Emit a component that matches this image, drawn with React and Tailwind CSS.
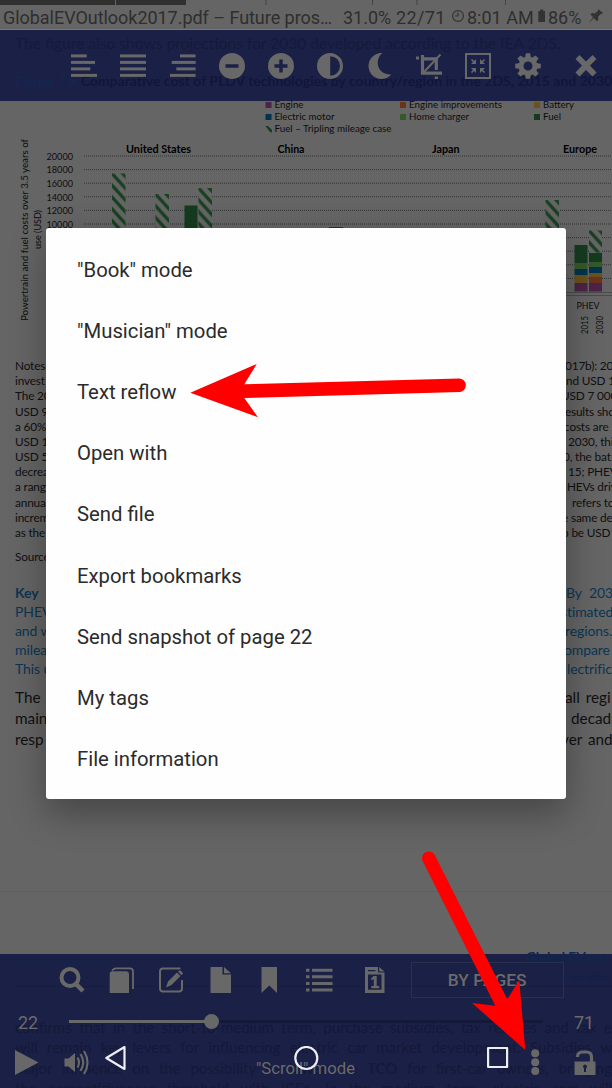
import React from "react";

const MENU = [
  '"Book" mode',
  '"Musician" mode',
  "Text reflow",
  "Open with",
  "Send file",
  "Export bookmarks",
  "Send snapshot of page 22",
  "My tags",
  "File information",
];

// [visible left part, visible right part, start x of the right part]
const NOTES = [
  ["Notes", "017b): 20", 565],
  ["invest", "nd USD 1", 566],
  ["The 20", "USD 7 000", 561],
  ["USD 9", "results sho", 561],
  ["a 60%", "costs are", 564],
  ["USD 1", "2030, thi", 568],
  ["USD 5", "0, the bat", 563],
  ["decrea", "15; PHEV", 568],
  ["a rang", "HEVs driv", 567],
  ["annua", "refers to", 572],
  ["increm", "e same de", 562],
  ["as the", "o be USD", 562],
];
const KEY = [
  ["PHEV", "stimated", 561],
  ["and w", "regions.", 565],
  ["milea", "ompare", 564],
  ["This u", "lectrific", 567],
];
const BODY = [
  ["The", "all regi", 565],
  ["main", "decad", 571],
  ["resp", "ver and", 561],
];

function Line({ row, className }) {
  return (
    <div className={"flex overflow-hidden whitespace-nowrap " + className}>
      <span className="shrink-0" style={{ width: row[2] - 15 }}>{row[0]}</span>
      <span className="shrink-0">{row[1]}</span>
    </div>
  );
}

function Icon({ w = 26, h = 26, children }) {
  return (
    <svg width={w} height={h} viewBox={`0 0 ${w} ${h}`} className="shrink-0" fill="#686868" stroke="none">
      {children}
    </svg>
  );
}

function Bars({ rows }) {
  return (
    <Icon>
      {rows.map(([x, w], i) => (
        <rect key={i} x={x} y={1.4 + i * 6.5} width={w} height="3" />
      ))}
    </Icon>
  );
}

function StatusBar() {
  return (
    <div className="relative h-[30px] shrink-0 border-b border-[#777] text-[#2e2e2e]">
      <svg className="absolute left-0 top-0" width="612" height="6">
        <path d="M0 0h115v5H0zM116 0h70v5h-70z" fill="#303030" />
        <path d="M266 0v5M372.500 0v5M417 0v5M505.500 0v5" stroke="#444" />
      </svg>
      <div className="flex h-[36px] items-center pl-[3px] text-[18px] leading-[36px] whitespace-nowrap">
        <span className="w-[340px] shrink-0 tracking-[-0.040px]">GlobalEVOutlook2017.pdf – Future pros…</span>
        <span className="w-[53px] shrink-0">31.0%</span>
        <span className="w-[55px] shrink-0 tracking-[0.350px]">22/71</span>
        <svg width="16" height="14" fill="none" stroke="#333" strokeWidth="1.2" className="-mt-1 shrink-0">
          <circle cx="7" cy="7" r="5.400" />
          <path d="M7 3.500V7H4" />
        </svg>
        <span className="w-[71px] shrink-0">8:01 AM</span>
        <svg width="10" height="14" fill="#333" className="-mt-1 shrink-0">
          <path d="M2.200 .5h3v1.500h1.800V13H.3V2h1.900z" />
        </svg>
        <span className="w-[40px] shrink-0">86%</span>
        <svg width="16" height="16" fill="#333" className="-mt-1 shrink-0">
          <path d="M10 1l5 4-1 1-1-.2-3 3 .4 3L9 13.200 5.800 10 1 15l4-6-2.600-2.600L4 5l3 .4 3.200-3z" />
        </svg>
      </div>
    </div>
  );
}

function TopBar() {
  return (
    <div className="relative h-[71px] shrink-0 overflow-hidden bg-[#1b2046]">
      <div className="absolute left-[15px] top-[3px] whitespace-nowrap font-[Lato] text-[15.600px] leading-[20px] text-[#151a3c]">
        The figure also shows projections for 2030 developed according to the IEA 2DS.
      </div>
      <div className="absolute left-[15px] top-[41px] whitespace-nowrap font-[Lato] text-[14px] font-bold leading-[20px] text-[#12163a]">
        <span className="text-[#14264f]">Figure 7 • </span>Comparative cost of PLDV technologies by country/region in the 2DS, 2015 and 2030
      </div>
      <div className="relative flex h-full items-center gap-[23.300px] pl-[71px]">
        <Bars rows={[[0, 15.7], [0, 24], [0, 19.3], [0, 26]]} />
        <Bars rows={[[0, 26], [0, 26], [0, 26], [0, 26]]} />
        <Bars rows={[[10, 15.6], [1.700, 24], [6.300, 19.3], [0, 25.6]]} />
        <Icon><path fillRule="evenodd" d="M13 0a13 13 0 1 0 0 26a13 13 0 0 0 0-26zM6.500 11.300h13v3.400h-13z" /></Icon>
        <Icon><path fillRule="evenodd" d="M13 0a13 13 0 1 0 0 26a13 13 0 0 0 0-26zM11.300 6.500h3.400v4.800h4.800v3.400h-4.800v4.800h-3.400v-4.800H6.500v-3.400h4.800z" /></Icon>
        <Icon><path fillRule="evenodd" d="M13 0a13 13 0 1 0 0 26a13 13 0 0 0 0-26zM13.200 3.200a9.800 9.800 0 0 1 0 19.600z" /></Icon>
        <Icon><path d="M15.500 0A13 13 0 1 0 24.300 21.500C16 22 10.700 16 10.700 10C10.700 5.500 12.700 2 15.500 0z" /></Icon>
        <Icon>
          <path fill="none" stroke="#686868" strokeWidth="3.2" d="M3 5H0M6.500 2V20.200H26M6.500 5.800H20.300V17M20.300 23.500V26" />
          <path fill="none" stroke="#686868" strokeWidth="2" d="M7 20L24.500 1.500" />
        </Icon>
        <Icon>
          <path fill="none" stroke="#686868" strokeWidth="2" d="M1 1h24v24H1z" />
          <path fill="none" stroke="#686868" strokeWidth="1.700" d="M6.500 6.500l3 3M19.500 6.500l-3 3M6.500 19.500l3-3M19.500 19.500l-3-3" />
          <path d="M11 6v5H6zM15 6v5h5zM11 20v-5H6zM15 20v-5h5z" />
        </Icon>
        <Icon>
          <circle cx="13" cy="13" r="7" fill="none" stroke="#686868" strokeWidth="5" />
          {[0, 45, 90, 135, 180, 225, 270, 315].map((a) => (
            <path key={a} transform={`rotate(${a} 13 13)`} d="M10.800 .2h4.400l.8 5h-6z" />
          ))}
        </Icon>
        <div className="ml-[9.500px]">
          <Icon><path d="M2.500 6l4-4L13 8.500l6.500-6.500L23.500 6l-6.500 6.500L23.500 19.500l-4 4L13 17l-6.500 6.500L2.500 19.500l6.500-7z" /></Icon>
        </div>
      </div>
    </div>
  );
}

const LEGEND = [
  [265.5, 3.5, "Engine", "#4d2347", 29],
  [400, 3.5, "Engine improvements", "#6b331c", 93],
  [534, 3.5, "Battery", "#6b511c", 31],
  [265.5, 15.5, "Electric motor", "#00344e", 60],
  [400, 15.5, "Home charger", "#35592a", 60],
  [534, 15.5, "Fuel", "#153b1f", 18],
  [265.5, 27.5, "Fuel – Tripling mileage case", null, 117],
];

// Striped bars: x, top, width, height
const STRIPED = [
  [112, 72.5, 13.5, 56],
  [155.5, 93, 13.5, 35],
  [198.5, 87, 13.5, 41],
  [545.5, 99, 13.5, 29],
  [589, 129.5, 13, 22],
];

function Chart() {
  return (
    <svg width="612" height="250" viewBox="0 0 612 250" className="shrink-0" fontFamily="Lato, sans-serif" fill="#0d0d0d">
      <defs>
        <pattern id="hatch" width="10.700" height="11.800" patternUnits="userSpaceOnUse">
          <path d="M-10.700 -11.800L21.400 23.600M-10.700 0L10.700 23.600M0 -11.800L21.400 11.800" stroke="#173f20" strokeWidth="3.300" />
        </pattern>
      </defs>
      {LEGEND.map(([x, y, t, c, w]) => (
        <g key={t}>
          {c ? <rect x={x} y={y - 2.5} width="6" height="6" fill={c} /> : <path d={`M${x} ${y - 2.5}h2.500l4 4v2.500l-2-.5z`} fill="#153b1f" />}
          <text x={x + 9} y={y + 3.3} fontSize="9.500" textLength={w} lengthAdjust="spacingAndGlyphs">{t}</text>
        </g>
      ))}
      <g fontWeight="700" fontSize="10.600" fill="#000">
        <text x="126" y="52" textLength="65" lengthAdjust="spacingAndGlyphs">United States</text>
        <text x="277.500" y="51.500" textLength="27" lengthAdjust="spacingAndGlyphs">China</text>
        <text x="432" y="52" textLength="27.500" lengthAdjust="spacingAndGlyphs">Japan</text>
        <text x="563" y="52" textLength="34" lengthAdjust="spacingAndGlyphs">Europe</text>
      </g>
      {[20000, 18000, 16000, 14000, 12000, 10000, 8000, 6000, 4000, 2000].map((v, i) => (
        <g key={v}>
          {i < 6 && <text x="46.500" y={58.700 + i * 13.600} fontSize="10.400" textLength="26.500" lengthAdjust="spacingAndGlyphs">{v}</text>}
          <path d={`M84 ${55 + i * 13.6}H612`} stroke="#333" strokeWidth="1" strokeDasharray="1 1" />
        </g>
      ))}
      {STRIPED.map(([x, y, w, h]) => (
        <g key={x} transform={`translate(${x} ${y})`}>
          <rect width={w} height={h} fill="#656565" />
          <rect width={w} height={h} fill="url(#hatch)" />
        </g>
      ))}
      <path d="M184.500 104.500h13V140h-13zM329 126h14v14h-14z" fill="#153b1f" />
      <path d="M574.500 144h13v18h-13zM589 152h13v10h-13z" fill="#153b1f" />
      <path d="M574.500 162h13v6h-13zM589 161h13v5h-13z" fill="#35592a" />
      <path d="M574.500 168h13v6h-13zM589 166h13v6h-13z" fill="#00344e" />
      <path d="M574.500 174h13v8h-13zM589 172h13v4h-13z" fill="#6b511c" />
      <path d="M589 176h13v6h-13z" fill="#6b331c" />
      <path d="M574.500 182h13v8.500h-13zM589 182h13v8.500h-13z" fill="#4d2347" />
      <path d="M46 191.500H612M46 194.500H612" stroke="#4a4a4a" strokeWidth="1" />
      <text x="576.500" y="208" fontSize="9.500" textLength="23" lengthAdjust="spacingAndGlyphs">PHEV</text>
      <text transform="translate(588 233) rotate(-90)" fontSize="9" textLength="18" lengthAdjust="spacingAndGlyphs">2015</text>
      <text transform="translate(602.500 233) rotate(-90)" fontSize="9" textLength="18" lengthAdjust="spacingAndGlyphs">2030</text>
      <text transform="translate(27.500 220) rotate(-90)" fontSize="9.800" textLength="182" lengthAdjust="spacingAndGlyphs">Powertrain and fuel costs over 3.5 years of</text>
      <text transform="translate(41 148) rotate(-90)" fontSize="9.800" textLength="39" lengthAdjust="spacingAndGlyphs">use (USD)</text>
    </svg>
  );
}

function Page() {
  return (
    <div className="flex h-[603px] shrink-0 flex-col overflow-hidden pl-[15px] font-[Lato] text-[#101010]">
      <div className="pt-[7px]">
        {NOTES.map((r) => <Line key={r[0]} row={r} className="h-[15.180px] text-[11.800px] leading-[15.180px] tracking-[-0.150px]" />)}
      </div>
      <div className="mt-[9px] text-[11.800px] leading-[15px] tracking-[-0.150px]">Source</div>
      <div className="mt-[19px] text-[#0c3552]">
        <div className="flex h-[19px] overflow-hidden whitespace-nowrap text-[14px] leading-[19px] tracking-[-0.100px]">
          <span className="w-[551px] shrink-0"><b>Key</b>&nbsp; p</span><span className="[word-spacing:4px]">By 2030</span>
        </div>
        {KEY.map((r) => <Line key={r[0]} row={r} className="h-[19px] text-[14px] leading-[19px] tracking-[-0.100px]" />)}
      </div>
      <div className="mt-[9px]">
        {BODY.map((r) => <Line key={r[0]} row={r} className="h-[21px] text-[15.300px] leading-[21px] [word-spacing:2px]" />)}
      </div>
      <div className="-ml-[15px] mt-[141px] h-px bg-[#606060]" />
    </div>
  );
}

function BottomBar() {
  return (
    <div className="relative flex h-[134px] shrink-0 flex-col bg-[#1b2046] text-[#6b6b6b]">
      <div className="absolute inset-0 overflow-hidden font-[Lato] text-[#141939]">
        <div className="absolute left-[15px] top-0 whitespace-nowrap text-[11.600px] leading-[14px] text-[#13254a]">© OECD/IEA 2017</div>
        <div className="absolute left-[564px] top-[17px] whitespace-nowrap text-[10.500px] leading-[12px] text-[#12204a]">Two millio</div>
        <div className="absolute left-[15px] top-[32px] h-px w-[597px] bg-[#181d40]" />
        <div className="absolute left-[15px] top-[63px] w-[597px] whitespace-nowrap text-[15px] leading-[20.300px] [text-align-last:justify]">
          <div>confirms that in the short-to-medium term, purchase subsidies, tax rebates and tax e</div>
          <div>will remain key levers for influencing electric car market development. Subsidies w</div>
          <div>major influence on the possibility to lower the TCO for first-car owners, bringing</div>
          <div>the competitiveness threshold with ICEs. In the medium term, electric cars will</div>
        </div>
      </div>
      <div className="absolute -top-[7px] left-[526px] whitespace-nowrap font-[Lato] text-[13.600px] font-bold leading-[20px] text-[#0b2850]">Global EV ou</div>

      <div className="relative flex h-[52px] items-center pl-[59px]">
        <div className="w-[50px]">
          <Icon>
            <circle cx="11" cy="10.500" r="8.500" fill="none" stroke="#686868" strokeWidth="4" />
            <path d="M16.500 16.500L24 24" stroke="#686868" strokeWidth="4.500" />
          </Icon>
        </div>
        <div className="w-[50px]">
          <Icon>
            <path d="M.7 26V7Q.7 4.300 3.500 4.300H17q3 0 3 3V26z" />
            <path d="M3 3.500Q5 1.300 7 1.300h14q3 0 3 3V22" fill="none" stroke="#686868" strokeWidth="1.800" />
          </Icon>
        </div>
        <div className="w-[50.500px]">
          <Icon>
            <path d="M21.500 1.500H4q-3 0-3 3v17q0 3 3 3h16q3 0 3-3V13" fill="none" stroke="#686868" strokeWidth="2" />
            <path d="M7 20.500l2-6L18 5.500l3.500 3.500-9 9zM19 4.500l1.500-1q1 0 1.500.5l1.500 1.500q.8 1 0 1.700l-1.200 1z" />
          </Icon>
        </div>
        <div className="w-[51.500px]">
          <Icon w={22}><path d="M.5 0h12v7.500h8.500V26H.5zM14 0l7 6.300h-7z" /></Icon>
        </div>
        <div className="w-[44.500px]">
          <Icon w={18}><path d="M.5 0h15.500v26l-7.700-7.500L.5 26z" /></Icon>
        </div>
        <div className="w-[59px]">
          <Icon w={28}>
            <path d="M0 1.700h3.500v3H0zM6 1.700h20.500v3H6zM0 8.300h3.500v3H0zM6 8.300h20.500v3H6zM0 14.900h3.500v3H0zM6 14.900h20.500v3H6zM0 21.500h3.500v3H0zM6 21.500h20.500v3H6z" />
          </Icon>
        </div>
        <div className="w-[46.500px]">
          <Icon w={20}>
            <path fillRule="evenodd" d="M0 0h13v5.500h6.500V26H0zM3 7.500v15.300h13.500V7.500zM3 3v1.300h7.500V3z" />
            <path d="M14.200 0l5.300 4.500h-5.300zM8.800 9h2.900v10h2.500v2.200H6.300V19h2.500v-6.700l-2.500 1v-2.200z" />
          </Icon>
        </div>
        <div className="flex h-[35.500px] w-[152.500px] items-center justify-center border border-[#2a2f50] pt-[2px] text-[17.300px] font-medium tracking-[0.050px]">BY PAGES</div>
      </div>

      <div className="relative flex h-[30px] items-center pl-[18px] text-[18px]">
        <span className="w-[51px] pt-[2px]">22</span>
        <div className="relative flex h-[3px] w-[474px] bg-[#14183a]">
          <div className="h-[3px] w-[142px] shrink-0 bg-[#686868]" />
          <div className="-ml-[7.500px] -mt-[6px] h-[15px] w-[15px] shrink-0 rounded-full bg-[#686868]" />
        </div>
        <span className="ml-[31px] pt-[2px]">71</span>
      </div>

      <div className="relative flex h-[52px] pl-[15px] pt-[10px]">
        <div className="w-[49px] pt-[4px]"><Icon><path d="M0 0l23.500 12.500L0 25z" /></Icon></div>
        <div className="w-[40px] pt-[3px]">
          <Icon>
            <path d="M.5 9.500h4L11 4v19l-6.500-5.500h-4z" />
            <path d="M13.500 8.500q3 5 0 10M16.500 5q5.500 8.500 0 17M20 2q7 11.500 0 23" fill="none" stroke="#686868" strokeWidth="2.100" />
          </Icon>
        </div>
        <svg width="24" height="26" className="shrink-0" fill="none" stroke="#eeeef4" strokeWidth="2.200" strokeLinejoin="round">
          <path d="M20.500 1v22L2.300 12z" />
        </svg>
        <div className="relative ml-[128px] w-[100px] whitespace-nowrap pt-[11px] text-[16.700px] leading-[24px]">
          "Scroll" mode
          <svg width="26" height="26" className="absolute left-[37px] top-0" fill="none" stroke="#eeeef4" strokeWidth="2.200">
            <circle cx="13.300" cy="12" r="11" />
          </svg>
        </div>
        <svg width="24" height="26" className="ml-[130px] shrink-0" fill="none" stroke="#eeeef4" strokeWidth="2.200" strokeLinejoin="round">
          <path d="M2.100 2h19v19h-19z" />
        </svg>
        <div className="ml-[20px] w-[44px] pt-[3px]">
          <Icon w={10}><circle cx="5.200" cy="4.300" r="4" /><circle cx="5.200" cy="13.300" r="4" /><circle cx="5.200" cy="22" r="4" /></Icon>
        </div>
        <div className="pt-[4px]">
          <Icon w={22}>
            <path d="M3.500 7q0-5 5-5h4q5 0 5 5v6" fill="none" stroke="#686868" strokeWidth="3.200" />
            <path fillRule="evenodd" d="M.5 11.500h21V25H.5zM11 14.500a2 2 0 0 0-1 3.700V22h2v-3.800a2 2 0 0 0-1-3.700z" />
          </Icon>
        </div>
      </div>
    </div>
  );
}

export default function App() {
  return (
    <div className="relative flex h-[1088px] w-[612px] flex-col overflow-hidden bg-[#656565] font-[Roboto]">
      <StatusBar />
      <TopBar />
      <Chart />
      <Page />
      <BottomBar />

      <div className="absolute left-[46px] top-[228px] h-[571px] w-[520px] rounded-[3px] bg-[#fefefe] pt-[11.200px] shadow-[0_14px_36px_rgba(0,0,0,0.32)]">
        {MENU.map((m) => (
          <div key={m} className="flex h-[61.200px] items-center pl-[31px] text-[20.300px] text-[#2b2b2b]">{m}</div>
        ))}
      </div>

      <svg className="absolute left-0 top-0" width="612" height="1088" fill="#ff0000">
        <path d="M190.300 392.700L256.700 364L244.300 384.300L459.600 378.500A6.800 6.800 0 0 1 460 392L244.300 398L258 417.300Z" />
        <path d="M525.300 1050L519.300 980L507.300 999.300L434.500 854.500A6.800 6.800 0 0 0 422.400 860.500L495.300 1005.700L472 1003Z" />
      </svg>
    </div>
  );
}
